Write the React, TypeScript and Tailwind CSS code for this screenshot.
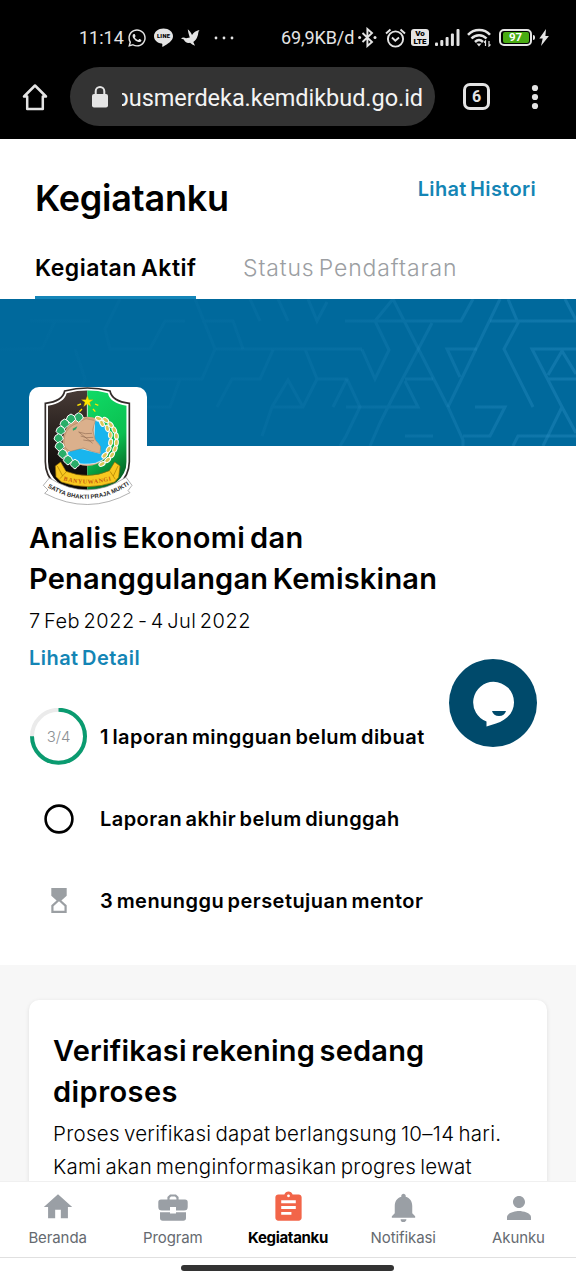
import type { ReactNode } from "react";
import { FaWhatsapp } from "react-icons/fa";
import { MdAssignment, MdHome, MdNotifications, MdPerson } from "react-icons/md";

function StatusBar() {
  return (
    <div className="flex h-[60px] items-center pt-[15px] pl-[79px] font-['Roboto',sans-serif] text-[18px] leading-none text-[#e4e4e4]">
      <span className="w-[48px] whitespace-nowrap">11:14</span>
      <FaWhatsapp className="h-[20px] w-[20px] shrink-0" />
      <svg className="ml-[7px] h-[19px] w-[19px] shrink-0" viewBox="0 0 18 18">
        <path d="M9 0.5C4 .5 0 3.7 0 7.7c0 3.5 3 6.400 7.200 7.100.9.200.8.600.6 2.400 0 .5.400.7 1 .300C13 15 18 12 18 7.700 18 3.700 14 .500 9 .500z" fill="currentColor" />
        <text x="9" y="9.700" textAnchor="middle" fontSize="5.500" fontWeight="900" fill="#000" textLength="12.500">LINE</text>
      </svg>
      <svg className="ml-[8px] h-[17px] w-[19px] shrink-0" viewBox="0 0 19 17">
        <path d="M0 9.500C1.500 8 3.500 8.300 5 9.300L8.800 8.500C8 6 7 3 6.800.300C8.500 2 10 3.500 11 6C12.500 3.300 15 1.800 18.500.900C16.800 3 17.500 4.800 16.500 7.300C15.700 10 14.500 11.500 12.300 13L14 16.800C12 16 10.500 15 9 13.800C6 14.500 4 13 2.800 10.500z" fill="currentColor" />
      </svg>
      <svg className="ml-[14px] h-[4px] w-[20px] shrink-0" viewBox="0 0 20 4">
        <circle cx="2" cy="2" r="1.400" fill="currentColor" />
        <circle cx="10" cy="2" r="1.400" fill="currentColor" />
        <circle cx="18" cy="2" r="1.400" fill="currentColor" />
      </svg>
      <span className="ml-[47px] w-[77px] whitespace-nowrap tracking-[-0.1px]">69,9KB/d</span>
      <svg className="h-[21px] w-[19px] shrink-0" viewBox="0 0 19 20" fill="none" stroke="currentColor" strokeWidth="1.900">
        <path d="M4.500 5.500l9.500 9-4.600 4V1.500l4.600 4-9.500 9" />
        <circle cx="1.600" cy="10" r="1.500" fill="currentColor" stroke="none" />
        <circle cx="17" cy="10" r="1.500" fill="currentColor" stroke="none" />
      </svg>
      <svg className="ml-[8px] h-[20px] w-[21px] shrink-0" viewBox="0 0 21 20" fill="none" stroke="currentColor" strokeWidth="1.900">
        <circle cx="10.500" cy="11" r="7.600" />
        <path d="M1 5.500L5.500 1.500M20 5.500l-4.500-4M7 9.500l3.300 3.200L14 9.500" />
      </svg>
      <span className="ml-[5px] flex h-[17px] w-[18px] shrink-0 flex-col items-center justify-center rounded-[3px] bg-[#e4e4e4] text-[8px] leading-[7.500px] font-black text-black">
        <span>Vo</span>
        <span>LTE</span>
      </span>
      <svg className="ml-[6px] h-[17px] w-[25px] shrink-0" viewBox="0 0 25 17" fill="currentColor">
        <rect x="0" y="13.500" width="3" height="3.500" rx="1" />
        <rect x="5.300" y="11" width="3" height="6" rx="1" />
        <rect x="10.600" y="8" width="3" height="9" rx="1" />
        <rect x="15.900" y="4.500" width="3" height="12.500" rx="1" />
        <rect x="21.500" y="0" width="3" height="17" rx="1" />
      </svg>
      <svg className="ml-[7px] h-[19px] w-[25px] shrink-0" viewBox="0 0 25 19" fill="none" stroke="currentColor" strokeWidth="2.500">
        <path d="M1 6.800c6-6.500 16.500-6.500 22 0M4.500 10.500c4.200-4.500 11-4.500 15 0M8 14c2.500-2.500 5.500-2.500 8 0" />
        <path d="M9.500 15.500h5L12 18.500z" fill="currentColor" stroke="none" />
        <path d="M18.500 18v-5l-1.500 1.500M22 13v5l1.500-1.500" strokeWidth="1.200" />
      </svg>
      <span className="ml-[7px] flex h-[17px] w-[33px] shrink-0 items-center justify-center rounded-[5px] border-2 border-[#e4e4e4]">
        <span className="flex h-[11px] w-[26px] shrink-0 items-center justify-center rounded-[2px] bg-[#48ab12] text-[11.500px] leading-none font-bold text-white">97</span>
      </span>
      <span className="ml-px h-[5px] w-[2px] shrink-0 rounded-r bg-[#e4e4e4]" />
      <svg className="ml-[4px] h-[17px] w-[10px] shrink-0" viewBox="0 0 10 17">
        <path d="M7 0L.3 9.500h3.400L2 17 9.900 7H6.400z" fill="currentColor" />
      </svg>
    </div>
  );
}

function BrowserBar() {
  return (
    <div className="flex h-[79px] items-center pb-[6px] pl-[22px]">
      <svg className="h-[28px] w-[26px] shrink-0" viewBox="0 0 26 28" fill="none" stroke="#e4e4e4" strokeWidth="2.500">
        <path d="M13 2.500L2 13.500h3.200V26h15.600V13.500H24z" strokeLinejoin="round" />
      </svg>
      <div className="ml-[22px] flex h-[59px] w-[365px] shrink-0 items-center rounded-full bg-[#333333] pl-[22px]">
        <svg className="h-[22px] w-[16px] shrink-0" viewBox="0 0 16 22">
          <path d="M3.700 9V5.300a4.300 4.300 0 0 1 8.600 0V9" fill="none" stroke="#e4e4e4" strokeWidth="2" />
          <rect x="0" y="8" width="16" height="13.500" rx="2" fill="#e4e4e4" />
        </svg>
        <div className="ml-[14px] flex w-[301px] justify-end overflow-hidden pt-[2px] font-['Roboto',sans-serif] text-[23.500px] leading-[34px] tracking-[-0.050px] whitespace-nowrap text-[#f3f3f3]">
          <span>pusmerdeka.kemdikbud.go.id</span>
        </div>
      </div>
      <div className="ml-[28px] flex h-[27px] w-[27px] shrink-0 items-center justify-center rounded-[7px] border-[3px] border-[#e4e4e4] font-['Roboto',sans-serif] text-[16px] leading-none font-bold text-[#e4e4e4]">
        6
      </div>
      <svg className="ml-[41px] h-[26px] w-[8px] shrink-0" viewBox="0 0 8 26" fill="#e4e4e4">
        <circle cx="4" cy="4" r="3.100" />
        <circle cx="4" cy="13" r="3.100" />
        <circle cx="4" cy="22" r="3.100" />
      </svg>
    </div>
  );
}

function BannerPattern() {
  return (
    <svg className="block h-[147px] w-[576px]" viewBox="0 0 576 147" fill="none">
      <defs>
        <linearGradient id="fade" gradientUnits="userSpaceOnUse" x1="0" y1="0" x2="576" y2="0">
          <stop offset="0" stopColor="#2b8fc4" stopOpacity="0.020" />
          <stop offset="0.4" stopColor="#2b8fc4" stopOpacity="0.080" />
          <stop offset="0.65" stopColor="#2b8fc4" stopOpacity="0.180" />
          <stop offset="0.85" stopColor="#2b8fc4" stopOpacity="0.310" />
          <stop offset="1" stopColor="#2b8fc4" stopOpacity="0.380" />
        </linearGradient>
      </defs>
      <g stroke="url(#fade)" strokeWidth="3">
        <path d="M393 0L448 108 463 141V147M345 22.010H461L473 0M393 0L375 22 389 51 375 80 362 50.500" />
        <path d="M432 24L392 100 380 124 370 147M405 80.010H433M405 82L418 108 346 108.010M500 0L448 108" />
        <path d="M460 78L447 50H477M490 22.010H576M508 0L518 24 504 50 533 108M565 0L576 21" />
        <path d="M576 50.010H532L562 108 576 134M548 76L562 52 576 75M548 80.010H576M562 108L543 147" />
        <path d="M475 108H505L490 137H463M513 147L518 137H576M405 137.010H433" />
        <path d="M216 50.010H362M305 50L317 80H347L360 108 346 137 340 147M317 80L303 108H272M303 108L288 81 272 108 262 137" />
        <path d="M347 80L333 108M273 51L260 80H232L217 108M308 0L317 22 327 3M250 0L260 22M278 0L288 22" />
        <path d="M202 22H233L243 50M195 0L215 50 202 80H140M120 0L105 30 110 50H150L165 22H185M30 22.010H90M55 22L42 50.010H0M75 50L85 80 75 105M180 80L170 108H135" />
      </g>
    </svg>
  );
}

const leaves: [number, number][] = [
  [176, 112], [153, 116], [134, 131], [122, 152], [116, 175], [119, 199], [128, 221], [144, 240], [165, 252],
];
const grains: [number, number, number][] = [
  [236, 116, 20], [257, 120, 35], [272, 134, 50], [283, 150, 65], [289, 168, 85], [289, 188, 95], [285, 207, 110],
  [276, 225, 125], [263, 240, 140], [246, 252, 155], [246, 130, 65], [262, 145, 75], [271, 165, 90], [272, 187, 100], [266, 208, 120], [254, 226, 135],
];

function Emblem() {
  return (
    <svg className="h-[118px] w-[118px]" viewBox="27 21 354 354">
      <defs>
        <linearGradient id="dark" x1="0" y1="0" x2="0" y2="1">
          <stop offset="0" stopColor="#4a3d38" />
          <stop offset="0.55" stopColor="#1d1715" />
          <stop offset="1" stopColor="#000" />
        </linearGradient>
        <linearGradient id="green" x1="0" y1="0" x2="0.3" y2="1">
          <stop offset="0" stopColor="#10dc68" />
          <stop offset="0.6" stopColor="#0bc050" />
          <stop offset="1" stopColor="#05551f" />
        </linearGradient>
        <clipPath id="shield">
          <path d="M140 40Q204 22 264 40Q270 70 320 77V245Q318 318 202 344Q84 318 84 245V77Q132 70 140 40z" />
        </clipPath>
        <path id="motto" d="M80 320Q203 396 328 314" />
        <path id="region" d="M130 301Q204 322 280 299" />
      </defs>
      <path d="M134 33Q202 15 270 33Q276 64 328 70V245Q326 330 202 354Q76 330 76 245V70Q128 64 134 33z" fill="#fff" stroke="#332c2a" strokeWidth="5" />
      <g clipPath="url(#shield)">
        <rect x="70" y="20" width="132" height="340" fill="url(#dark)" />
        <rect x="202" y="20" width="130" height="340" fill="url(#green)" />
      </g>
      <path d="M202 65V110" stroke="#fff" strokeWidth="2" />
      <path d="M202 47l4.500 12h13l-10.500 8 4 12.500-11-7.500-11 7.500 4-12.500-10.500-8h13z" fill="#ffe600" stroke="#c29b00" strokeWidth="1" />
      <path d="M172 76l11-4M178 95l8-8M235 76l-10-4M226 95l-7-8" stroke="#ffe600" strokeWidth="4" />
      <circle cx="202" cy="184" r="74" fill="#d2a47e" />
      <path d="M224 120Q270 132 274 184Q272 236 226 250Q150 262 142 218Q164 198 192 208L240 220 238 196 222 176z" fill="#18b5ee" stroke="#fff" strokeWidth="2" />
      <path d="M132 180Q134 150 158 136L198 116 226 122 218 150 226 180 242 200 240 220 214 214 190 204 152 214Q130 208 132 180z" fill="#dbb08c" stroke="#a07c5c" strokeWidth="1.500" />
      <path d="M176 156Q196 164 216 160M182 168Q198 176 220 172M190 180Q206 184 222 182M176 156L218 190" stroke="#84604a" strokeWidth="1.600" fill="none" />
      <path d="M158 146l14-7-4 9-9 4z" fill="#2ba465" />
      {leaves.map(([x, y]) => (
        <path key={`${x}-${y}`} d="M0-14L10-8 14 2 6 10 0 15-7 10-14 2-10-8z" transform={`translate(${x} ${y})`} fill="#2aae69" stroke="#fff" strokeWidth="3" />
      ))}
      {grains.map(([x, y, a]) => (
        <ellipse key={`${x}-${y}`} cx={x} cy={y} rx="10" ry="6" transform={`rotate(${a} ${x} ${y})`} fill="#dcc658" stroke="#fff" strokeWidth="3" />
      ))}
      <path d="M106 258L122 246 138 274Q204 300 268 272L284 246 300 258 296 292 284 306Q204 334 124 306L108 290z" fill="#f8c820" stroke="#8b6708" strokeWidth="2" />
      <path d="M112 258L128 288M120 296L138 276M294 258L280 288M286 298L270 274" stroke="#a87900" strokeWidth="2" />
      <text fontSize="18" fontWeight="700" fill="#c55a10" className="font-['Liberation_Serif',serif]">
        <textPath href="#region" textLength="146">BANYUWANGI</textPath>
      </text>
      <path d="M88 294Q203 366 318 292L336 316 324 332 330 338Q204 408 74 340L84 330 70 316z" fill="#fff" stroke="#8a8a8a" strokeWidth="2" />
      <text fontSize="18" fontWeight="700" fill="#262626" className="font-['Liberation_Sans',sans-serif]">
        <textPath href="#motto" textLength="260" startOffset="3">SATYA BHAKTI PRAJA MUKTI</textPath>
      </text>
    </svg>
  );
}

function TaskRow({ icon, children }: { icon: ReactNode; children: ReactNode }) {
  return (
    <div className="flex h-[82px] items-center">
      <div className="flex w-[58px] shrink-0 justify-center">{icon}</div>
      <div className="ml-[13px] text-[20px] leading-none font-semibold tracking-[0.450px] whitespace-nowrap [word-spacing:-2px]">{children}</div>
    </div>
  );
}

function NavItem({ icon, label, active = false }: { icon: ReactNode; label: string; active?: boolean }) {
  return (
    <div className="flex flex-1 flex-col items-center">
      <div className={active ? "flex h-[34px] items-center text-[#f26549]" : "flex h-[34px] items-center text-[#9a9fa5]"}>{icon}</div>
      <span className={active ? "mt-[4px] text-[15px] leading-[20px] font-bold tracking-[-0.300px] text-black" : "mt-[4px] text-[15px] leading-[20px] tracking-[-0.100px] text-[#656a70]"}>
        {label}
      </span>
    </div>
  );
}

export default function App() {
  return (
    <div className="relative flex h-[1280px] w-[576px] flex-col overflow-hidden bg-white font-['Inter','Noto_Sans',sans-serif] text-black">
      <header className="h-[139px] shrink-0 bg-black">
        <StatusBar />
        <BrowserBar />
      </header>

      <main className="min-h-0 flex-1 overflow-hidden">
        <div className="flex h-[104px] items-start justify-between pr-[40px] pl-[35px]">
          <h1 className="pt-[37px] text-[36px] leading-[45px] font-semibold tracking-[-0.200px]">Kegiatanku</h1>
          <a className="pt-[38px] text-[20px] leading-[24px] font-semibold tracking-[0.340px] text-[#1485b5] [word-spacing:-2px]">Lihat Histori</a>
        </div>
        <div className="flex h-[56px] gap-[47px] pl-[35px] text-[23px] leading-[30px] whitespace-nowrap">
          <div className="w-[161px] border-b-[3px] border-[#1485b8] pt-[10px] font-semibold tracking-[0.480px] [word-spacing:-2px]">Kegiatan Aktif</div>
          <div className="pt-[10px] font-light tracking-[0.850px] text-[#9b9ea2] [word-spacing:-3px]">Status Pendaftaran</div>
        </div>

        <div className="h-[147px] bg-[#00699c]">
          <BannerPattern />
        </div>

        <section className="flow-root h-[519px] px-[29px]">
          <div className="relative -mt-[59px] h-[118px] w-[118px] rounded-[10px] bg-white">
            <Emblem />
          </div>
          <h2 className="mt-[12px] text-[29px] leading-[41px] font-semibold whitespace-nowrap [word-spacing:-3px]">
            <span className="block tracking-[0.370px]">Analis Ekonomi dan</span>
            <span className="block tracking-[0.210px]">Penanggulangan Kemiskinan</span>
          </h2>
          <p className="mt-[6px] text-[20px] leading-[32px] font-light tracking-[0.560px] [word-spacing:-3px]">7 Feb 2022 - 4 Jul 2022</p>
          <a className="mt-[5px] block text-[20px] leading-[32px] font-semibold tracking-[0.450px] text-[#1485b5] [word-spacing:-2px]">Lihat Detail</a>
          <div className="mt-[22px]">
            <TaskRow
              icon={
                <div className="relative flex h-[58px] w-[58px] items-center justify-center">
                  <svg className="absolute inset-0" viewBox="0 0 58 58" fill="none" strokeWidth="4">
                    <circle cx="29.500" cy="28.300" r="26.500" stroke="#ebebeb" />
                    <path d="M29.500 1.800A26.500 26.500 0 1 1 3 28.300" stroke="#0a9b70" />
                  </svg>
                  <span className="pb-[2px] pl-px text-[15px] leading-none font-light text-[#8d9195]">3/4</span>
                </div>
              }
            >
              1 laporan mingguan belum dibuat
            </TaskRow>
            <TaskRow
              icon={
                <svg className="mb-px ml-[2px] h-[30px] w-[30px]" viewBox="0 0 30 30">
                  <circle cx="15" cy="15" r="13.400" fill="none" stroke="#000" strokeWidth="2.600" />
                </svg>
              }
            >
              Laporan akhir belum diunggah
            </TaskRow>
            <TaskRow
              icon={
                <svg className="mb-px ml-[2px] h-[25px] w-[16px]" viewBox="0 0 16 26">
                  <path d="M0 0H16V8L10.500 13 16 18V26H0V18L5.500 13 0 8z" fill="#9b9fa3" />
                  <path d="M2.300 19L8 13.700 13.700 19V23.700H2.300z" fill="#fff" />
                </svg>
              }
            >
              3 menunggu persetujuan mentor
            </TaskRow>
          </div>
        </section>

        <section className="h-[300px] bg-[#f7f7f7] px-[29px] pt-[35px]">
          <div className="h-[300px] rounded-[10px] bg-white pt-[30px] pl-6 shadow-[0_1px_4px_rgba(0,0,0,0.1)]">
            <h2 className="text-[29px] leading-[41px] font-semibold whitespace-nowrap [word-spacing:-3px]">
              <span className="block tracking-[0.200px]">Verifikasi rekening sedang</span>
              <span className="block tracking-[0.450px]">diproses</span>
            </h2>
            <p className="mt-[5px] text-[20.500px] leading-[33px] font-light tracking-[0.290px] whitespace-nowrap [word-spacing:-2px]">
              Proses verifikasi dapat berlangsung 10–14 hari.
              <br />
              Kami akan menginformasikan progres lewat
            </p>
          </div>
        </section>
      </main>

      <nav className="flex h-[77px] shrink-0 border-t border-b border-[#e0e0e0] border-t-[#f0f0f0] bg-white pt-[8px]">
        <NavItem icon={<MdHome className="h-[34px] w-[34px]" />} label="Beranda" />
        <NavItem
          icon={
            <svg className="h-[27px] w-[30px]" viewBox="0 0 30 27" fill="currentColor">
              <path d="M10.500 6V3.500L12.500 1.500H17.500L19.500 3.500V6" fill="none" stroke="currentColor" strokeWidth="2.200" />
              <path d="M3 5.500H27A2.700 2.700 0 0 1 29.700 8.200V13Q29.700 16.500 26 16.500H18V13H12V16.500H4Q.3 16.500.3 13V8.200A2.700 2.700 0 0 1 3 5.500z" />
              <path d="M2 18.300H12V19.500H18V18.300H28V24A2.700 2.700 0 0 1 25.300 26.700H4.700A2.700 2.700 0 0 1 2 24z" />
            </svg>
          }
          label="Program"
        />
        <NavItem active icon={<MdAssignment className="h-[35px] w-[35px]" />} label="Kegiatanku" />
        <NavItem icon={<MdNotifications className="h-[35px] w-[35px]" />} label="Notifikasi" />
        <NavItem icon={<MdPerson className="mt-px ml-px h-[36px] w-[36px]" />} label="Akunku" />
      </nav>
      <div className="flex h-[22px] shrink-0 justify-center bg-white pt-[7px] pr-px">
        <div className="h-[6px] w-[213px] rounded-full bg-[#333333]" />
      </div>

      <button className="absolute top-[659px] left-[449px] flex h-[88px] w-[88px] items-center justify-center rounded-full bg-[#004a6b]">
        <svg className="h-[88px] w-[88px]" viewBox="0 0 88 88">
          <path d="M44.500 22.800A20.500 20.500 0 0 1 65 43.500C65 54 57 61.500 47 64.500L37.500 67.500V62.500A20.500 20.500 0 0 1 44.500 22.800z" fill="#fff" />
          <path d="M43 52H57Q55.500 57 50 57T43 52z" fill="#004a6b" />
        </svg>
      </button>
    </div>
  );
}
